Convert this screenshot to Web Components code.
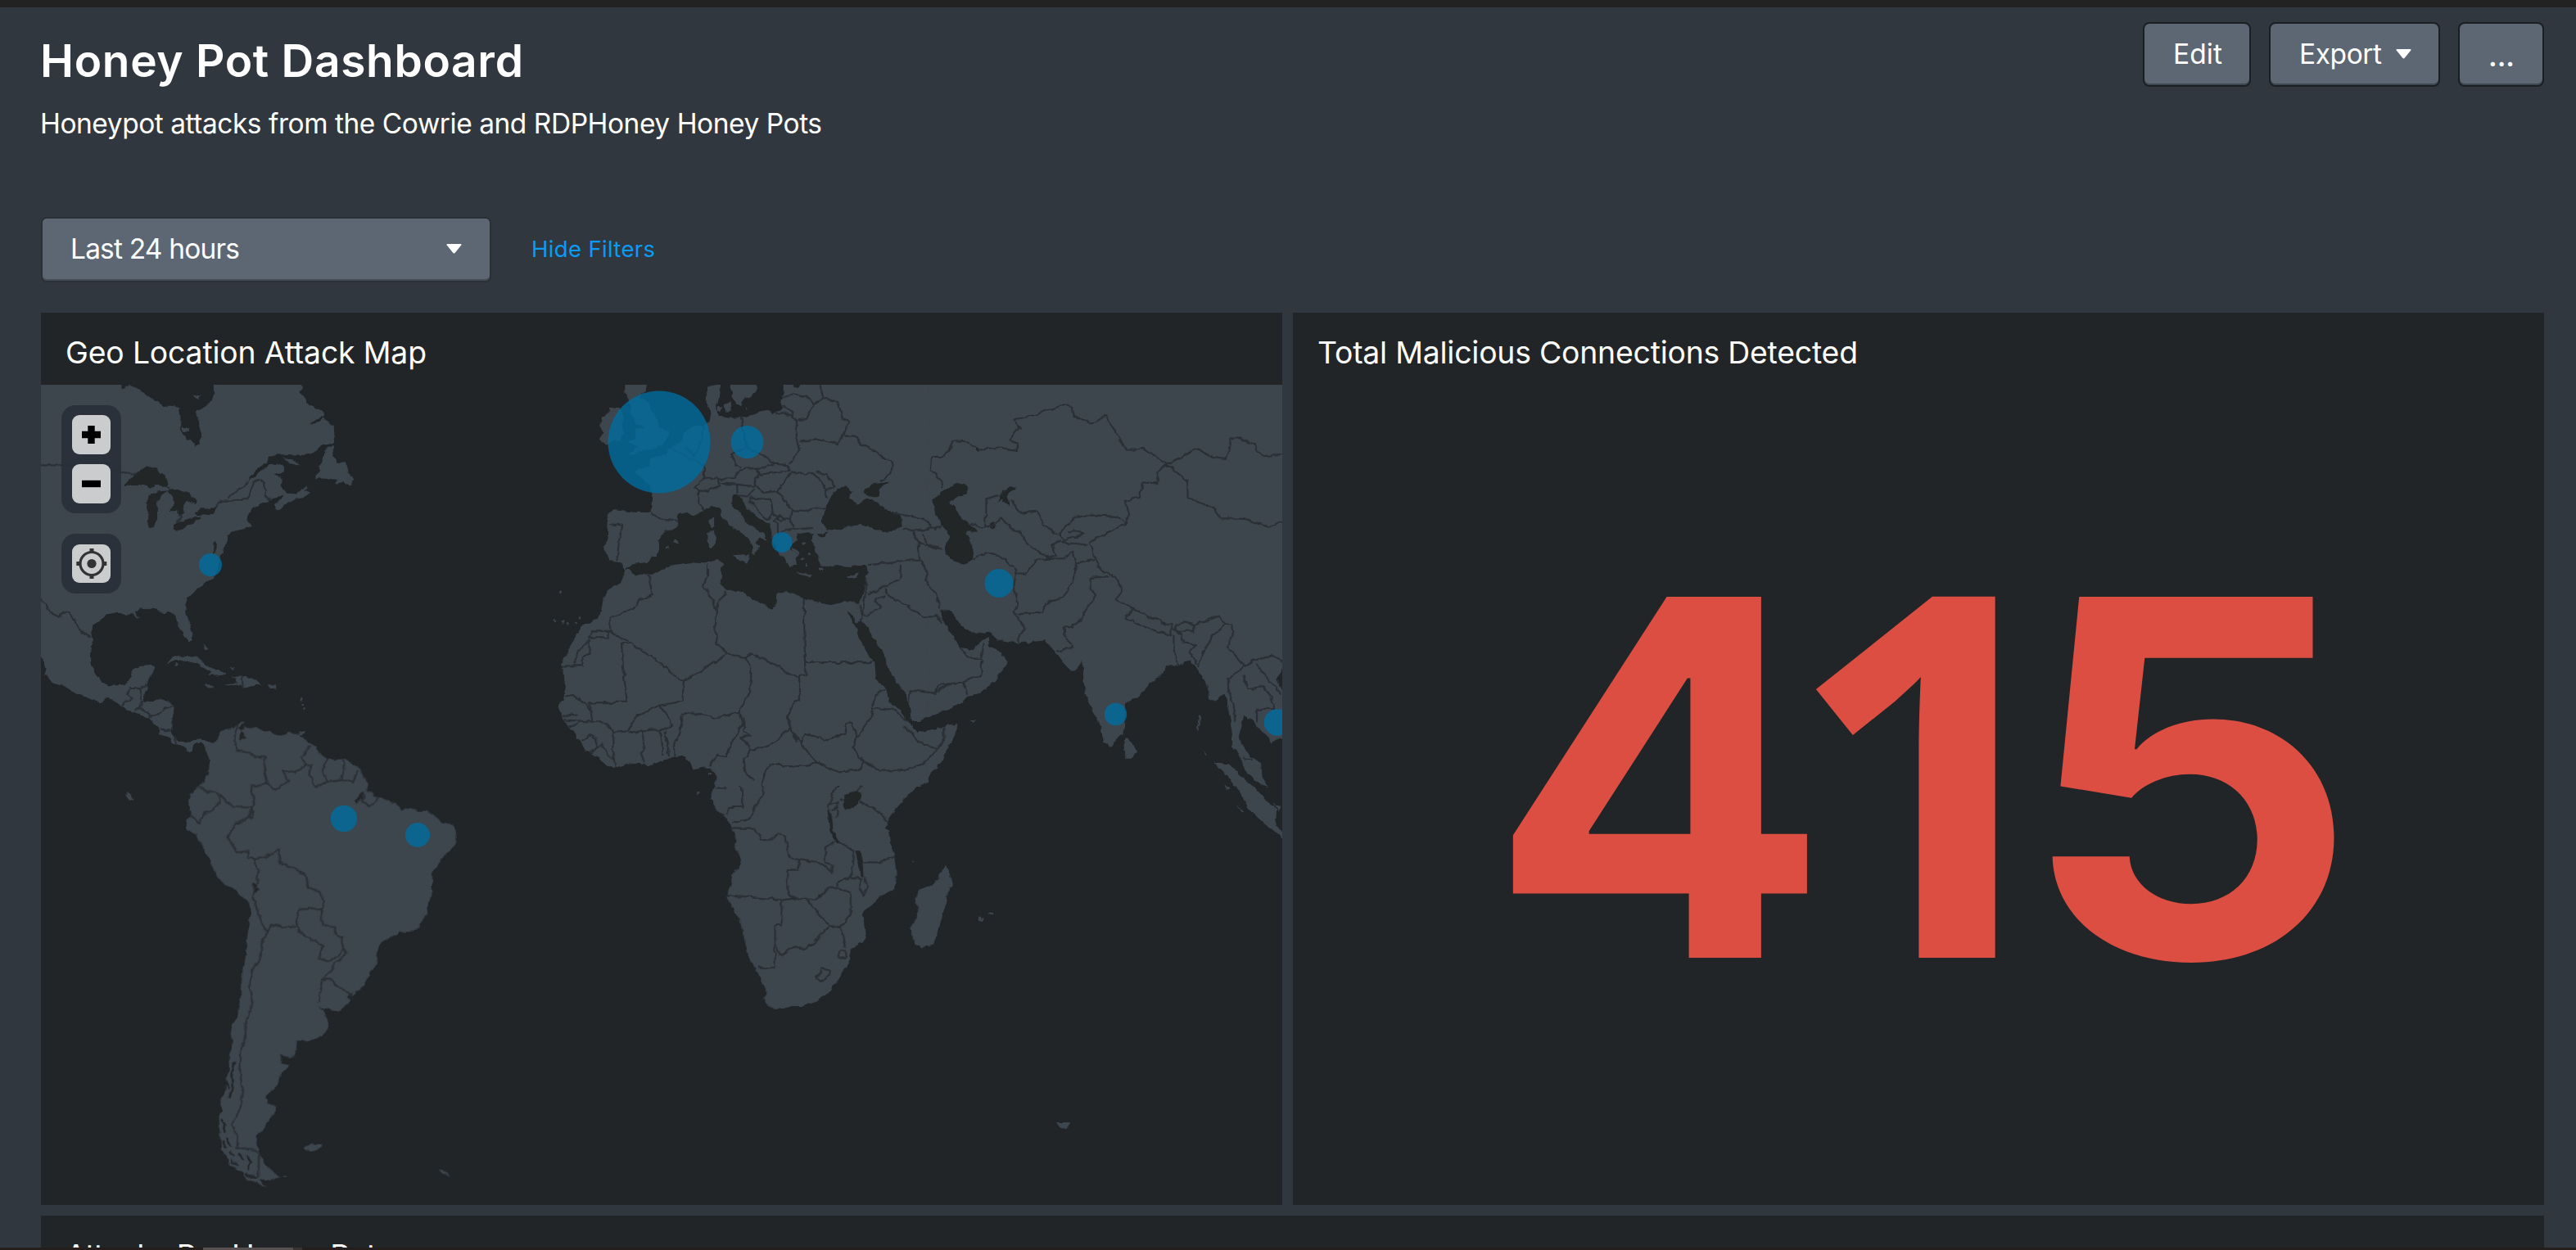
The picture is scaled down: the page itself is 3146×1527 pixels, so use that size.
<!DOCTYPE html>
<html lang="en">
<head>
<meta charset="utf-8">
<title>Honey Pot Dashboard</title>
<style>
  html, body { margin: 0; height: 100%; overflow: hidden; background: #31373e; }
  body { font-family: Inter, "Liberation Sans", sans-serif; color: #fff; }
</style>
</head>
<body>
<honeypot-dashboard></honeypot-dashboard>

<template id="map-art">
<svg viewBox="50 470 1516 1002" width="1516" height="1002">
<defs>
<filter id="coast" x="40" y="460" width="1540" height="1030" filterUnits="userSpaceOnUse">
<feTurbulence type="fractalNoise" baseFrequency="0.11" numOctaves="2" seed="4" result="n"/>
<feDisplacementMap in="SourceGraphic" in2="n" scale="6" xChannelSelector="R" yChannelSelector="G"/>
<feGaussianBlur stdDeviation="0.7"/>
</filter>
</defs>
<style>
.l{fill:#3d444d}.w{fill:#212527}
.b{fill:none;stroke:#2a2f34;stroke-width:2.1;stroke-linejoin:round}
.b path,.b circle,.b ellipse,.r path{vector-effect:non-scaling-stroke}
.r{fill:none;stroke:#212527;stroke-width:2.4;stroke-linecap:round}
.pin{fill:#006d9f;fill-opacity:.8}
</style>
<g filter="url(#coast)">
<!-- North and Central America -->
<g transform="translate(40 460) scale(.34439 .33333)">
<g class="l">
<path d="M0,0 L312,0 312,40 345,33 375,44 400,65 420,82 440,90 465,107 495,107 520,115 524,150 523,185 533,205 545,228 562,240 575,254 590,248 592,235 600,215 592,190 590,165 582,145 578,130 600,118 622,100 637,82 642,60 640,0 948,0 955,45 945,55 965,80 980,105 1010,118 1032,130 1035,145 1005,155 980,175 1000,172 1030,152 1045,168 1068,180 1070,220 1065,240 1030,250 1010,262 990,282 960,288 900,285 860,288 840,296 830,315 800,335 775,365 765,388 790,365 820,335 850,322 880,318 893,332 890,350 855,358 878,365 885,380 882,400 890,415 905,428 930,430 950,420 970,398 975,410 962,418 985,425 965,440 940,445 905,462 890,475 872,495 858,488 858,470 880,450 890,432 870,440 850,450 835,455 800,470 775,485 765,505 762,530 775,548 740,560 710,570 690,580 690,600 680,625 668,655 660,690 645,735 620,750 595,770 570,790 550,810 540,840 545,870 555,900 566,940 566,965 555,975 545,962 530,940 515,910 512,885 500,870 485,858 462,866 445,852 420,848 400,855 385,850 362,862 378,885 355,872 340,877 315,868 290,866 262,872 245,890 225,898 212,915 210,940 215,965 207,985 203,1020 205,1050 218,1080 235,1112 255,1125 275,1134 310,1130 335,1125 350,1100 355,1072 380,1062 410,1060 430,1062 425,1085 410,1110 405,1135 400,1165 390,1185 400,1192 430,1187 470,1185 490,1192 502,1210 498,1240 492,1270 492,1300 505,1320 520,1335 545,1342 570,1330 600,1327 620,1340 645,1352 622,1370 610,1352 600,1340 585,1340 570,1355 565,1370 555,1375 540,1362 515,1350 495,1345 490,1330 470,1320 450,1308 445,1290 430,1275 412,1250 385,1242 350,1230 330,1225 315,1210 295,1190 268,1178 235,1192 200,1180 150,1160 115,1138 90,1130 60,1110 42,1095 48,1070 40,1045 20,1020 0,1000Z"/>
<path d="M1063,248 1070,262 1060,290 1075,305 1082,318 1105,312 1118,345 1125,360 1135,378 1128,402 1110,395 1100,380 1080,395 1070,390 1085,372 1050,375 1000,372 1000,360 1015,345 1018,325 1035,290 1045,260Z"/>
<path d="M888,296 920,303 948,322 935,325 905,314Z"/><path d="M527,183 550,190 552,205 535,200Z"/><path d="M568,70 595,65 588,88Z"/>
<path d="M475,1050 490,1032 520,1022 550,1023 590,1035 620,1055 650,1075 690,1088 670,1095 620,1098 635,1085 610,1070 575,1050 540,1040 510,1038 490,1045Z"/>
<path d="M705,1098 730,1100 760,1097 790,1112 810,1130 770,1132 745,1142 735,1130 685,1132 690,1128 725,1125 722,1108Z"/>
<path d="M605,1130 625,1129 648,1137 625,1145Z"/><path d="M833,1129 864,1129 864,1139 838,1140Z"/><path d="M603,978 612,984 621,1006 610,1001Z"/><path d="M700,1068 716,1066 708,1075Z"/>
<path d="M335,1528 348,1532 350,1550 340,1548Z"/><path d="M950,1302 964,1300 960,1312 950,1312Z"/>
<circle cx="950" cy="1180" r="4"/><circle cx="955" cy="1200" r="4"/><circle cx="962" cy="1216" r="4"/><circle cx="510" cy="1055" r="6"/>
</g>
<g class="w">
<path d="M320,403 345,375 375,350 390,335 405,325 440,335 450,350 468,360 478,395 460,402 440,395 420,408 395,398 360,395Z"/>
<path d="M402,460 415,435 440,422 482,418 462,432 443,450 440,480 442,520 432,552 412,555 406,530 410,490Z"/>
<path d="M480,416 520,413 555,425 577,450 574,468 545,455 530,480 535,500 515,510 515,490 486,490 502,470 500,440Z"/>
<path d="M498,548 520,533 560,518 597,511 590,524 550,547 520,560 502,557Z"/>
<path d="M574,502 590,485 625,481 654,476 645,497 625,509 585,507Z"/>
<path d="M250,316 265,314 268,324 252,325Z"/><path d="M640,610 650,605 648,650 640,650Z"/>
</g>
<g class="b"><path d="M20,325H255M275,342 310,346 330,356 370,360M468,395 485,412M525,505 510,540M650,474 672,455 745,455 765,440 772,415 785,385 800,375 822,390 825,430 838,455M765,388 690,445M20,810 50,840 65,870 90,882 110,862 130,868 155,905 175,940 210,957M345,1143H383V1185M345,1143 335,1160 355,1178 325,1190 318,1210M405,1130 383,1143M390,1188 378,1215 362,1228M378,1215 410,1228 415,1248 440,1240 470,1212 500,1210M450,1292 492,1295M510,1325V1350M740,1100 742,1140"/></g>
</g>
<!-- South America -->
<g transform="translate(200 860) scale(.33333 .39541)">
<g class="l">
<path d="M150,138 L172,125 190,112 203,100 205,85 230,77 255,75 275,62 292,52 298,60 275,75 285,90 300,70 325,75 345,70 358,85 385,88 430,95 460,88 475,95 510,90 500,98 518,105 535,122 550,130 570,150 595,168 620,172 655,170 680,178 705,190 727,207 730,225 750,250 740,270 760,275 785,290 815,293 845,305 865,318 868,330 890,322 930,330 965,330 990,345 1020,365 1060,372 1070,395 1073,415 1062,440 1040,460 1015,485 985,518 983,560 985,580 972,610 965,645 945,670 935,690 915,702 865,705 840,718 810,730 785,750 780,770 780,800 765,820 745,845 735,865 710,885 690,905 670,930 650,947 620,948 590,942 568,932 592,950 600,975 607,990 590,1020 560,1035 520,1040 488,1040 485,1080 465,1092 430,1085 428,1110 458,1115 455,1130 430,1140 420,1180 395,1190 375,1215 385,1235 412,1245 408,1265 375,1295 365,1318 342,1335 340,1360 350,1390 365,1415 385,1435 405,1450 425,1460 385,1470 350,1468 375,1495 345,1480 300,1465 280,1445 245,1425 228,1400 212,1375 205,1330 202,1270 215,1260 200,1230 225,1205 228,1160 240,1130 235,1105 245,1080 250,1050 243,1010 265,970 285,910 285,850 300,780 312,700 318,650 312,612 270,582 220,555 190,530 185,510 150,455 120,405 85,390 80,360 100,345 90,310 100,280 130,255 165,215 167,170Z"/>
<path d="M512,1372 545,1358 582,1358 575,1374 545,1382 518,1382Z"/><path d="M1005,1437 1028,1440 1050,1462 1040,1458 1020,1446Z"/><path d="M432,1458 452,1458 445,1463Z"/>
</g>
<g class="w"><ellipse cx="288" cy="102" rx="10" ry="11"/><path d="M322,556 333,556 353,575 342,582Z"/><path d="M700,302 735,268 728,292 705,308Z"/><path d="M670,905 692,892 685,915Z"/></g>
<g class="r"><path d="M258,1108 250,1140 254,1170 242,1215M225,1165 235,1185M212,1285 225,1300 222,1320M232,1345 245,1365M215,1350 226,1370M240,1385 258,1395M275,1392 290,1405M305,1395 320,1415 310,1440M250,1410 265,1422M300,1455 340,1462"/></g>
<g class="b"><path d="M275,65 260,85 255,110 270,145 310,150 335,165 372,167 370,210 380,245 322,255 320,275 335,290 325,322 328,350 312,355 325,322M130,255 165,272 205,280 255,318 322,320M205,280V300L180,325 145,340 130,368 100,345M325,322 310,350 262,372 235,412 270,458 310,455 312,475 332,480 365,475 420,452 425,490 520,525 530,570 570,580 588,610 578,635 530,630 495,640 483,685 520,718 585,748 565,785 600,795 640,780 655,755 655,720 635,720 625,690 580,685 578,635M655,755 672,770 625,805 583,850 567,920M583,850 610,852 672,890 690,905M483,688 445,690 400,682 382,700 368,697 345,640 330,600M332,480 348,510 340,560 325,605M385,700 358,740 355,785 325,820 312,870 325,925 298,990 300,1030 282,1080 280,1150 292,1190 280,1250 250,1300 270,1340V1372L320,1375 345,1385M348,1390V1462M380,245 410,265 460,238 435,205 480,210 520,190 505,165 535,130M520,190 540,190 535,225 560,255 600,242 580,205 600,168M600,242 650,235 690,238 712,205M655,175 660,200 655,238M735,278 728,300 755,316 780,302 786,290"/></g>
</g>
<!-- Southern Africa -->
<g transform="translate(660 880) scale(.34439 .33333)">
<g class="l">
<path d="M620,160 625,200 615,250 603,290 625,325 660,360 680,395 695,440 690,470 708,510 705,535 685,560 675,600 665,630 663,655 690,705 718,755 722,800 735,850 745,885 770,920 780,950 800,990 793,1020 805,1045 832,1063 880,1048 935,1047 985,1030 1030,985 1060,945 1080,910 1097,890 1100,835 1145,815 1155,795 1153,760 1140,708 1185,665 1205,645 1245,625 1262,600 1262,560 1255,495 1240,450 1235,410 1225,400 1235,360 1255,325 1300,275 1350,225 1400,180 1440,110 1470,50 1478,12 1440,22 1340,45 1310,30 1250,20 650,20Z"/>
<path d="M1440,530 1455,560 1463,605 1450,610 1440,670 1415,750 1395,820 1355,833 1325,820 1313,760 1335,720 1340,700 1328,655 1345,620 1385,605 1410,580 1412,565Z"/>
<circle cx="557" cy="265" r="5"/><circle cx="1318" cy="519" r="4"/><circle cx="1567" cy="730" r="6"/>
</g>
<g class="w"><path d="M1075,270 1110,262 1138,270 1120,315 1100,325 1078,325Z"/><path d="M1017,318 1034,360 1038,402 1064,450 1052,454 1026,404Z"/><path d="M1116,478 1132,478 1142,520 1146,575 1134,573 1128,520Z"/><path d="M1048,243 1064,220 1070,230 1056,246Z"/><path d="M978,658 990,636 1020,624 1000,640Z"/></g>
<g class="b"><path d="M623,220 750,228 755,205 800,190 785,280 760,320 750,350 720,370 680,375M620,248H655V222M690,225 715,245V318H665L660,350M680,395H760L785,440 825,435 840,415 870,430 882,505 915,510V548H875V625L905,660M665,640 850,658 940,650 975,658 1030,610 1100,630V710L1065,760 1025,752 985,710 945,655M855,660V750H832V905L800,912 770,900M835,820 850,865 900,828 945,840 1025,752M1065,760 1080,830M915,510 1000,525 1035,560V530L1010,520V465L1045,445M1058,450 1110,475 1105,540 1100,575 1050,595V610M1145,520 1200,520 1255,500M1100,575 1140,580 1130,615 1145,640 1160,610 1150,575M1130,295 1190,330 1230,370M1275,300 1268,200 1285,182M1150,155 1130,190 1145,230 1120,262M1055,190 1060,225 1035,270 1020,320M1020,310 1055,300V325L1030,330M1055,330 1050,355M1060,290H1075"/><circle cx="1070" cy="857" r="15"/><path d="M982,940 1000,910 1028,918 1025,935 995,957Z"/></g>
</g>
<!-- Asia -->
<g transform="translate(1100 460) scale(.33333 .36990)">
<g class="l">
<path d="M-20,-20 1420,-20 1420,960 1398,970 1375,1000 1400,1040 1420,1190 1385,1195 1355,1215 1350,1190 1320,1175 1305,1150 1285,1135 1255,1118 1245,1160 1235,1190 1260,1225 1285,1260 1320,1275 1325,1320 1345,1355 1300,1335 1265,1310 1250,1270 1235,1240 1210,1220 1218,1180 1205,1120 1190,1050 1150,1070 1128,1068 1125,1030 1105,990 1075,950 1060,940 1000,952 972,955 965,985 930,1000 870,1055 825,1080 820,1130 818,1180 795,1195 770,1222 748,1210 735,1165 710,1120 675,1040 665,960 658,940 650,965 625,973 590,940 565,910 530,872 430,880 345,868 325,842 280,850 230,830 205,800 175,768 145,775 150,800 185,850 215,895 265,900 300,870 320,860 325,895 370,912 393,940 350,1000 290,1045 245,1055 225,1078 160,1105 65,1138 42,1138 28,1080 -20,990Z"/>
<path d="M-30,1190 0,1165 20,1150 60,1178 140,1160 210,1150 185,1210 150,1270 100,1320 40,1370 0,1410 -30,1440Z"/>
<path d="M825,1190 850,1210 865,1240 845,1262 820,1262 818,1220Z"/>
<path d="M1145,1272 1200,1280 1260,1330 1300,1360 1330,1390 1375,1430 1370,1485 1420,1510 1420,1540 1340,1480 1285,1440 1245,1380 1200,1320Z"/>
<path d="M1360,1410 1390,1420 1385,1436Z"/><path d="M252,1132 276,1134 268,1142Z"/><path d="M1188,1350 1204,1358 1200,1366Z"/><path d="M1228,1410 1258,1438 1250,1438Z"/><path d="M1092,1118 1100,1120 1090,1172 1086,1165Z"/><path d="M1108,1235 1118,1248 1112,1248Z"/>
</g>
<g class="w">
<path d="M118,410 145,380 210,352 248,360 240,390 205,400 180,415 200,435 220,465 240,480 262,485 282,515 240,515 262,560 262,605 225,620 190,605 160,590 170,545 185,530 150,490 130,455Z"/>
<path d="M355,415 368,385 400,363 424,368 388,388 398,430 380,418 370,405Z"/><circle cx="340" cy="490" r="10"/><circle cx="280" cy="241" r="7"/>
</g>
<g class="b"><path d="M155,365 150,345 110,310 115,265 155,265 200,212 245,215 280,240 350,235 420,245 428,225 398,208 435,170 418,142 500,125 590,95 628,100 635,130 700,155 750,128 825,240 895,238 975,290 940,315V352L885,350 875,400 822,408 835,450 828,485 790,462 690,458 635,470 580,518M310,500V405L360,392M400,410 440,450 500,445 525,490 575,520M260,480 300,500 340,490 370,468 400,500 435,510 460,550 540,598M580,520 600,540 670,520 640,505 610,515M580,545 555,555 570,590 540,600M580,545 620,550 680,555M828,485 740,525 690,550 715,605 735,640 790,660 810,710 790,735 850,768 980,820M265,605 310,582 370,595 425,640 415,690 430,750 415,780M425,650 460,650 500,605 600,600 630,578 645,615 640,660 595,730 530,750 525,780 420,785M645,615 710,605M415,780 460,830 430,860V878M760,660 695,665V700L715,725 640,820 600,830V850L630,895 570,905M850,768 825,800 900,830 990,855 995,820 950,815M1010,820 1040,812 1075,820V840H1010ZM1000,855V900L1015,950M995,835 1030,850 1035,880 1080,885 1060,910 1085,950M1080,820 1165,790 1190,820 1140,860 1105,915 1090,960M1190,815 1215,820 1220,855 1195,890 1260,955 1200,1000V1040L1220,1080 1225,1140M1260,960 1290,940 1360,920 1395,940M1255,985 1270,1030 1330,1025 1370,1080 1365,1100H1305V1140M1300,950 1350,1000 1395,1050M975,290 1085,240 1140,265 1195,270 1210,205 1230,200 1295,225 1320,260 1410,256M975,290 1050,345 1052,400 1150,435 1170,468 1260,470 1350,495 1410,478M215,895 245,928 295,930 305,880M298,935 295,985 230,1008 140,1020 125,1045 35,1040M228,1010 245,1050M1255,1260 1290,1268M100,500 150,495M100,560 150,570"/></g>
</g>
<!-- Europe and Northern Africa -->
<g transform="translate(660 460) scale(.33333)">
<g class="l">
<path d="M610,40 608,100 625,130 620,165 590,180 560,180 530,200 520,235 480,260 460,285 430,292 400,305 410,325 375,335 340,350 365,365 385,385 412,420 410,470 402,498 350,497 270,490 240,505 248,540 245,590 235,630 250,660 247,675 285,680 300,695 310,708 300,740 285,760 250,780 230,810 225,850 215,880 190,900 155,910 125,960 100,1010 75,1050 85,1080 90,1130 85,1180 65,1210 80,1255 100,1280 120,1300 150,1340 170,1370 215,1400 265,1437 300,1425 345,1418 395,1428 440,1410 485,1395 530,1393 545,1410 560,1438 610,1432 640,1450 645,1475 640,1500 1390,1500 1420,1485 1400,1303 1385,1305 1365,1290 1360,1258 1385,1258 1420,1240 1420,0 890,0 890,60 880,90 885,120 850,135 830,125 775,140 735,150 690,152 650,140 645,110 655,60 660,25Z"/>
<path d="M695,0 790,0 790,50 770,75 745,80 735,105 715,100 700,75Z"/><path d="M668,100 695,92 698,120 680,130Z"/><path d="M650,108 665,110 662,128 650,122Z"/>
<path d="M310,0 395,0 385,55 360,75 400,95 405,125 430,155 440,190 470,200 465,235 440,255 400,270 360,275 320,292 345,265 360,258 325,240 345,225 355,195 380,180 350,175 335,145 330,110 320,80 310,60z"/>
<path d="M255,110 290,115 305,140 300,170 305,215 280,235 235,245 218,230 230,205 220,180 225,150 250,135Z"/>
<circle cx="72" cy="790" r="6"/><circle cx="80" cy="900" r="6"/><circle cx="102" cy="908" r="5"/><circle cx="142" cy="884" r="5"/><circle cx="54" cy="890" r="4"/><circle cx="130" cy="900" r="4"/>
</g>
<g class="w">
<path d="M310,708 330,690 360,685 395,680 425,655 435,635 430,600 450,575 500,550 505,505 530,500 560,510 600,490 625,473 655,485 665,510 690,545 725,565 760,590 780,625 776,648 788,655 802,625 788,605 800,590 830,603 822,580 790,560 750,530 730,495 700,475 700,445 720,430 740,450 760,485 800,520 840,540 850,570 850,600 865,630 885,660 905,685 915,700 925,690 940,690 935,665 945,655 915,630 930,610 945,600 940,580 975,570 1000,580 998,600 1005,640 1020,665 1025,690 1055,700 1090,690 1130,702 1160,690 1195,690 1200,720 1190,760 1180,810 1165,830 1120,825 1060,838 1010,825 965,815 930,795 900,785 865,800 862,835 845,852 815,832 775,820 755,795 720,785 690,785 655,758 665,730 660,705 670,690 650,672 600,685 550,682 490,690 440,710 400,728 340,722 325,708Z"/>
<path d="M1030,530 1040,490 1060,450 1075,420 1115,400 1145,425 1130,445 1155,470 1190,450 1220,450 1260,480 1320,510 1325,545 1300,565 1255,570 1220,555 1170,542 1130,550 1100,565 1050,560Z"/>
<path d="M1180,425 1215,395 1275,386 1245,415 1240,440 1195,435Z"/><path d="M1010,578 1058,568 1035,590Z"/>
<path d="M1125,860 1133,862 1160,905 1178,902 1192,908 1215,950 1240,990 1265,1030 1268,1060 1300,1110 1335,1160 1350,1200 1362,1258 1362,1285 1320,1225 1280,1190 1270,1150 1230,1110 1225,1050 1195,1010 1160,930Z"/>
<path d="M925,20 955,20 945,42 930,38Z"/>
</g>
<g class="l"><path d="M700,655 765,650 760,688 730,675Z"/><path d="M612,570 640,566 642,610 625,628 615,625Z"/><path d="M618,530 636,512 637,550 625,557Z"/><path d="M936,718 995,727 990,736 945,728Z"/><path d="M1122,735 1168,720 1150,740 1130,742Z"/><ellipse cx="498" cy="606" rx="9" ry="7"/><circle cx="466" cy="628" r="5"/><circle cx="965" cy="612" r="5"/><circle cx="985" cy="650" r="5"/><circle cx="960" cy="668" r="5"/><circle cx="1030" cy="703" r="6"/><circle cx="975" cy="690" r="4"/><path d="M925,625 950,645 945,655 925,638Z"/><path d="M752,112 760,115 755,122Z"/><circle cx="618" cy="1456" r="6"/></g>
<g class="b"><path d="M255,540 300,548 290,590 285,630 280,675M402,500 440,520 505,530M475,262 510,280 570,310 600,325V370L565,405 580,420V460L600,490M530,255 565,290 590,240 600,180M600,370 650,375 655,400 610,420 580,418M650,375 710,372 730,340 795,335 800,360 780,402 720,395 650,392M720,395 722,430M737,150 742,200 755,260 700,285 715,320 735,332M755,260 820,290 860,320 795,340M860,320 910,325V348L870,350 800,360 785,395 820,425 870,420 915,355M865,130 930,148 942,180 935,215 948,270 915,320M890,75 940,65 990,80 1000,105 975,155 940,160M885,110 920,125 930,148M1025,20 1040,78 1000,100M1040,78 1090,95 1105,145 1130,170 1105,215 1090,250 1020,232 950,235M1105,215 1155,215 1175,250 1220,270 1290,315 1285,355 1245,385M915,350 1000,358 1030,380 1045,420 1050,445M1010,350 1050,358 1080,405 1045,420M870,420 900,465 925,490 970,492 1045,480M915,520 930,560 1000,555M725,435 760,440 785,410M765,445 840,450 850,500 830,525 795,490 765,450M850,500 880,530 915,520 920,490M855,530 880,510 900,530M850,530 870,540V575L925,555M1200,690 1270,685 1350,672 1390,675 1420,715 1410,750 1450,800 1465,850M1320,690 1318,740 1200,800M1265,775 1275,805 1330,830 1400,880 1455,880 1470,900M1290,500 1400,520 1430,545 1450,560M1330,555 1365,565 1425,560M1365,565 1385,615 1390,675M1385,610 1460,625M1400,575 1425,620M1195,740 1190,800 1180,870 1200,875 1245,845 1225,820 1265,805M1168,835 1178,880 1175,905"/>
<path d="M395,730 410,800 360,820 340,850 255,885 250,955H180L178,1015 155,1030V1060H75M250,932 190,935 178,965 135,1015 122,1055M250,930 330,975 460,1065 500,1105 525,1112 580,1085 685,1015 650,980 640,930 645,860 632,820 597,765 612,730V688M330,978H297L305,1090 318,1193 180,1195 190,1262M90,1175 120,1170 165,1195 180,1220M80,1248 110,1238 140,1242M85,1258 190,1265 245,1270 265,1305V1370L275,1435M100,1280 135,1275 140,1262M645,850 650,825 680,795V785M685,1015 755,1030 775,1015 945,1102M965,815 970,1090 948,1095V1185L930,1190 905,1250 940,1340M970,1047H1215M755,1030 772,1090 768,1160 725,1225 750,1290M515,1270 525,1235 580,1235 635,1250 690,1240 725,1230M525,1112 520,1190 437,1205 350,1245 322,1300 265,1305M437,1205 485,1275 465,1292 375,1297 322,1310M515,1235 512,1310 490,1345V1393M470,1393V1350L455,1300M448,1390 445,1330 435,1297M375,1297 378,1350 368,1390 378,1418M155,1335 180,1315 205,1325V1365L180,1380M205,1365 225,1345 245,1385 270,1405M620,1430 650,1385 680,1390 730,1290 745,1260M745,1250V1300L770,1318 735,1320 770,1365 745,1400 750,1445 780,1480M770,1368 835,1355 915,1290 955,1345 1015,1418 930,1430 840,1420 820,1455 815,1500M955,1340 970,1310 1050,1330 1115,1310 1120,1270 1145,1272 1160,1325 1215,1240 1225,1165 1260,1145M1215,1215 1290,1220 1350,1265M1160,1325 1145,1360 1185,1410 1240,1445 1330,1445 1400,1420 1455,1365M1330,1280 1350,1300 1385,1340 1455,1362 1480,1330V1285M1185,1410 1165,1445 1095,1450 1015,1418M1350,1195 1355,1150 1445,1160 1500,1125"/></g>
</g>
<g class="l"><path d="M1290,1371 1306,1371 1304,1378 1294,1377Z"/><circle cx="1196" cy="1122" r="2.4"/><circle cx="1210" cy="1115" r="2"/><path d="M153,971 160,973 166,976 158,978Z"/></g>
</g>
<g class="pin"><circle cx="805" cy="540" r="62.5"/><circle cx="912.5" cy="540" r="20"/><circle cx="955" cy="662.5" r="12.5"/><circle cx="1220" cy="712.5" r="17.5"/><circle cx="1362.5" cy="872.5" r="13.7"/><circle cx="1560" cy="882.5" r="16.3"/><circle cx="257" cy="690" r="14"/><circle cx="420" cy="1000" r="16.3"/><circle cx="510" cy="1020" r="15"/></g>
</svg>
</template>

<script>
const define = (name, html, init) => customElements.define(name, class extends HTMLElement {
  constructor() {
    super();
    this.attachShadow({ mode: 'open' }).innerHTML = html;
  }
  connectedCallback() { if (init) init.call(this); }
});

/* One line of text tracked so that it fills the width given, in pixels. */
define('fit-text', `<style>
  :host { display: block; white-space: nowrap; }
  span { display: inline-block; }
</style><span><slot></slot></span>`, function () {
  const span = this.shadowRoot.querySelector('span');
  const want = Number(this.getAttribute('width'));
  const gap = (want - span.getBoundingClientRect().width) / (this.textContent.length - 1);
  span.style.letterSpacing = gap.toFixed(3) + 'px';
  span.style.marginRight = (-gap).toFixed(3) + 'px';
});

define('caret-icon', `<style>:host{display:block}svg{display:block}</style>
<svg width="19" height="12" viewBox="0 0 19 12"><path d="M1.3,0H17.7Q19,.2 18.3,1.6L10.8,10.8Q9.5,12 8.2,10.8L.7,1.6Q0,.2 1.3,0Z" fill="#fff"/></svg>`);

define('dash-button', `<style>
  :host { display: flex; box-sizing: border-box; height: 79px; border: 2px solid #1a1f23; border-radius: 8px;
    background: #5c6773; box-shadow: inset 0 -2px #3f4851; align-items: center; padding: 0 0 2px 35px; gap: 17px;
    font-size: 33.5px; line-height: 40px; }
</style><slot></slot>`);

define('dash-select', `<style>
  :host { display: flex; box-sizing: border-box; width: 550px; height: 80px; border: 2px solid #2b3036; border-radius: 7px;
    background: #5c6773; box-shadow: inset 0 -2px #434b55; align-items: center; justify-content: space-between;
    padding: 0 34px 3px 34px; font-size: 33.5px; line-height: 40px; }
</style><slot></slot><caret-icon></caret-icon>`);

define('dash-header', `<style>
  :host { display: flex; justify-content: space-between; align-items: flex-start; height: 256px; box-sizing: border-box; padding: 18px 39px 0 49px; }
  .text { padding-top: 17px; }
  .title { font-size: 55px; font-weight: 600; line-height: 60px; margin-bottom: 27px; }
  .sub { font-size: 33.5px; line-height: 40px; }
  .actions { display: flex; gap: 22px; }
  .edit { width: 132px; } .export { width: 209px; } .more { width: 105px; }
  .dots { padding-top: 6px; font-weight: 600; }
</style>
<div class="text"><fit-text class="title" width="590">Honey Pot Dashboard</fit-text>
<fit-text class="sub" width="955">Honeypot attacks from the Cowrie and RDPHoney Honey Pots</fit-text></div>
<div class="actions">
<dash-button class="edit"><fit-text width="60">Edit</fit-text></dash-button>
<dash-button class="export"><fit-text width="101">Export</fit-text><caret-icon></caret-icon></dash-button>
<dash-button class="more"><fit-text class="dots" width="32">...</fit-text></dash-button>
</div>`);

define('filter-bar', `<style>
  :host { display: flex; align-items: center; height: 80px; padding-left: 50px; gap: 49px; margin-bottom: 37px; }
  .link { color: #0a9cf5; font-size: 27.5px; line-height: 34px; padding-bottom: 2px; }
</style><dash-select><fit-text width="207">Last 24 hours</fit-text></dash-select><fit-text class="link" width="151">Hide Filters</fit-text>`);

define('dash-panel', `<style>
  :host { display: flex; flex-direction: column; background: #212527; overflow: hidden; }
  header { height: 88px; flex: none; box-sizing: border-box; padding: 9px 0 0 30px; display: flex; align-items: center; font-size: 37.3px; line-height: 44px; }
  .body { flex: 1; min-height: 0; display: flex; }
</style><header><slot name="title"></slot></header><div class="body"><slot></slot></div>`);

define('map-controls', `<style>
  :host { display: flex; flex-direction: column; gap: 25px; width: 73px; }
  .group { display: flex; flex-direction: column; align-items: center; gap: 12px; padding: 12px 0; border-radius: 17px; background: rgba(41,47,56,.88); }
  .key { width: 47px; height: 48px; border-radius: 9px; background: #cbccce; }
  .loc .key { height: 47px; } .loc { padding: 13px 0; }
  svg { display: block; }
</style>
<div class="group">
<div class="key"><svg width="47" height="48"><path d="M12,24H35M23.5,13V35" stroke="#000" stroke-width="8.4"/></svg></div>
<div class="key"><svg width="47" height="48"><path d="M12,24H35" stroke="#000" stroke-width="8.4"/></svg></div></div>
<div class="group loc"><div class="key"><svg width="47" height="47" fill="none" stroke="#333"><circle cx="24" cy="23.5" r="14" stroke-width="3.2"/><circle cx="24" cy="23.5" r="5.6" fill="#333" stroke="none"/><path d="M5.3,23.5H11M37,23.5H42.3M24,5V10M24,37V42" stroke-width="5"/></svg></div></div>`);

define('attack-map', `<style>
  :host { display: block; position: relative; width: 1516px; height: 1002px; overflow: hidden; }
  svg { display: block; }
  map-controls { position: absolute; left: 25px; top: 25px; }
</style>`, function () {
  this.shadowRoot.append(document.getElementById('map-art').content.cloneNode(true), document.createElement('map-controls'));
});

/* The figure of the panel; each digit has its own cell width, face and stretch. */
define('single-value', `<style>
  :host { flex: 1; display: flex; align-items: center; justify-content: center; padding: 0 4px 42px 0; color: #dc4e41;
    font-family: Inter, "Liberation Sans", sans-serif; font-weight: 700; font-size: 606px; line-height: 720px; }
  div { white-space: nowrap; height: 720px; }
  span { display: inline-flex; justify-content: center; }
  .d4 { width: 400px; transform: scaleX(1.018); }
  .d1 { width: 264px; font-family: "Open Sans", "Noto Sans", sans-serif; font-size: 618px; line-height: 0; }
  .d5 { width: 366px; transform: scaleX(1.07); }
</style><div></div>`, function () {
  this.shadowRoot.querySelector('div').innerHTML =
    [...this.getAttribute('value')].map(d => `<span class="d${d}">${d}</span>`).join('');
});

define('honeypot-dashboard', `<style>
  :host { display: flex; flex-direction: column; height: 1527px; overflow: hidden; background: #31373e; }
  .top { height: 9px; flex: none; background: #222; }
  .row { display: grid; grid-template-columns: 1516px 1528px; gap: 13px; padding-left: 50px; height: 1090px; flex: none; }
  .next { margin: 13px 39px 0 50px; height: 39px; flex: none; }
  .edge { height: 3px; flex: none; background: #241e1d; display: flex; padding-left: 248px; }
  .edge i { width: 110px; background: #565150; } .edge i + i { width: 11px; background: #393331; }
  dash-header, filter-bar { flex: none; }
</style>
<div class="top"></div>
<dash-header></dash-header>
<filter-bar></filter-bar>
<div class="row">
<dash-panel><fit-text slot="title" width="441">Geo Location Attack Map</fit-text><attack-map></attack-map></dash-panel>
<dash-panel><fit-text slot="title" width="660">Total Malicious Connections Detected</fit-text><single-value value="415"></single-value></dash-panel>
</div>
<dash-panel class="next"><fit-text slot="title" width="380">Attacks Per Honey Pot</fit-text></dash-panel>
<div class="edge"><i></i><i></i></div>`);
</script>
</body>
</html>
